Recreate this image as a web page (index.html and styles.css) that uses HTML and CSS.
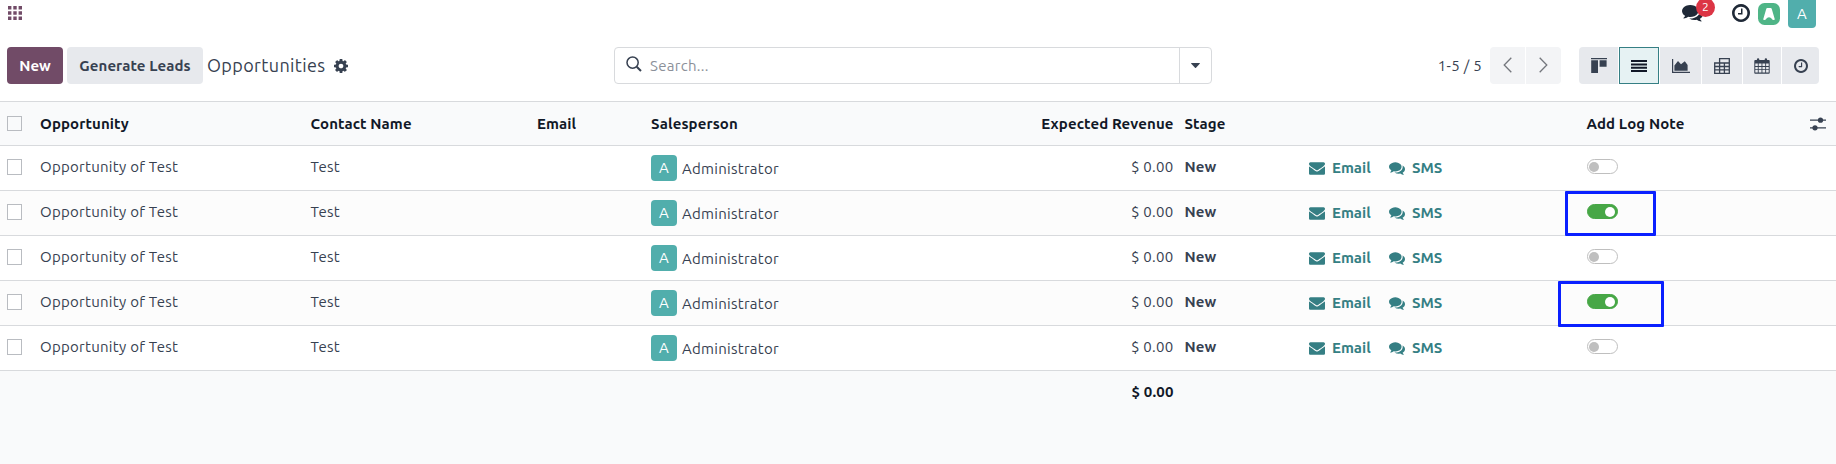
FILE: index.html
```html
<!DOCTYPE html>
<html lang="en">
<head>
<meta charset="utf-8">
<title>Opportunities</title>
<link rel="stylesheet" href="styles.css">
</head>
<body>
<svg class="defs" width="0" height="0" aria-hidden="true">
  <symbol id="comments" viewBox="0 0 1792 1792"><path d="M1408 768q0 139-94 257t-256.5 186.5-353.5 68.5q-86 0-176-16-124 88-278 128-36 9-86 16h-3q-11 0-20.5-8t-11.5-21q-1-3-1-6.5t.5-6.5 2-6l2.5-5 3.5-5.5 4-5 4.5-5 4-4.5q5-6 23-25t26-29.5 22.5-29 25-38.5 20.5-44q-124-72-195-177t-71-224q0-139 94-257t256.5-186.5 353.5-68.5 353.5 68.5 256.5 186.5 94 257zm384 256q0 120-71 224.5t-195 176.5q10 24 20.5 44t25 38.5 22.5 29 26 29.5 23 25q1 1 4 4.5t4.5 5 4 5 3.5 5.5l2.5 5 2 6 .5 6.5-1 6.5q-3 14-13 22t-22 7q-50-7-86-16-154-40-278-128-90 16-176 16-271 0-472-132 58 4 88 4 161 0 309-45t264-129q125-92 192-212t67-254q0-77-23-152 129 71 204 178t75 230z"/></symbol>
  <symbol id="envelope" viewBox="0 0 1792 1792"><path d="M1792 710v794q0 66-47 113t-113 47h-1472q-66 0-113-47t-47-113v-794q44 49 101 87 362 246 497 345 57 42 92.5 65.5t94.5 48 110 24.500h2q51 0 110-24.500t94.500-48 92.500-65.500q170-123 498-345 57-39 100-87zm0-294q0 79-49 151t-122 123q-376 261-468 325-10 7-42.500 31t-54 38.500-52 32.500-57.500 27-50 9h-2q-23 0-50-9t-57.500-27-52-32.500-54-38.500-42.500-31q-91-64-262-182.500t-205-142.500q-62-42-117-115.500t-55-136.500q0-78 41.500-130t118.500-52h1472q65 0 112.500 47t47.500 113z"/></symbol>
  <symbol id="cog" viewBox="128 128 1536 1536"><path d="M1152 896q0-106-75-181t-181-75-181 75-75 181 75 181 181 75 181-75 75-181zm512-109v222q0 12-8 23t-20 13l-185 28q-19 54-39 91 35 50 107 138 10 12 10 25t-9 23q-27 37-99 108t-94 71q-12 0-26-9l-138-108q-44 23-91 38-16 136-29 186-7 28-36 28h-222q-14 0-24.5-8.5t-11.5-21.5l-28-184q-49-16-90-37l-141 107q-10 9-25 9-14 0-25-11-126-114-165-168-7-10-7-23 0-12 8-23 15-21 51-66.5t54-70.5q-27-50-41-99l-183-27q-13-2-21-12.5t-8-23.5v-222q0-12 8-23t19-13l186-28q14-46 39-92-40-57-107-138-10-12-10-24 0-10 9-23 26-36 98.5-107.5t94.5-71.5q13 0 26 10l138 107q44-23 91-38 16-136 29-186 7-28 36-28h222q14 0 24.5 8.5t11.5 21.5l28 184q49 16 90 37l142-107q9-9 24-9 13 0 25 10 129 119 165 170 7 8 7 22 0 12-8 23-15 21-51 66.5t-54 70.5q26 50 41 98l183 28q13 2 21 12.5t8 23.5z"/></symbol>
  <symbol id="clock" viewBox="128 128 1536 1536"><path d="M1024 544v448q0 14-9 23t-23 9h-320q-14 0-23-9t-9-23v-64q0-14 9-23t23-9h224v-352q0-14 9-23t23-9h64q14 0 23 9t9 23zm416 352q0-148-73-273t-198-198-273-73-273 73-198 198-73 273 73 273 198 198 273 73 273-73 198-198 73-273zm224 0q0 209-103 385.5t-279.5 279.5-385.5 103-385.5-103-279.5-279.5-103-385.5 103-385.5 279.5-279.5 385.5-103 385.5 103 279.5 279.5 103 385.5z"/></symbol>
</svg>

<header class="topbar">
  <svg class="apps" viewBox="0 0 14 14"><path d="M0 0h3.4v3.4H0zM5.3 0h3.4v3.4H5.3zM10.6 0H14v3.4h-3.4zM0 5.3h3.4v3.4H0zM5.3 5.3h3.4v3.4H5.3zM10.6 5.3H14v3.4h-3.4zM0 10.6h3.4V14H0zM5.3 10.6h3.4V14H5.3zM10.6 10.6H14V14h-3.4z"/></svg>
  <div class="systray">
    <div class="messages"><svg class="messages-icon"><use href="#comments"/></svg><span class="badge">2</span></div>
    <svg class="activity-icon"><use href="#clock"/></svg>
    <svg class="call-icon" viewBox="0 0 22 22"><rect width="22" height="22" rx="6.5" fill="#4fb587"/><path d="M9.3 5h3.4q.7 0 1 .8l3 10.1q.2 1-.7 1.1-1.500.2-2.300-1.200-.8-1.500-2.700-1.500t-2.700 1.500Q7.500 17.200 6 17q-.9-.1-.7-1.100l3-10.100q.3-.8 1-.8z" fill="#fff"/></svg>
    <span class="user">A</span>
  </div>
</header>

<section class="control">
  <div class="control-left">
    <button class="btn btn-new">New</button>
    <button class="btn btn-gen">Generate Leads</button>
    <h1 class="title">Opportunities</h1>
    <svg class="gear"><use href="#cog"/></svg>
  </div>
  <div class="search">
    <svg class="search-icon" viewBox="0 0 16 16"><circle cx="6.600" cy="6.600" r="5.600"/><path d="M10.700 10.700 15 15" stroke-width="2"/></svg>
    <span class="placeholder">Search...</span>
    <span class="search-drop"><svg class="caret" viewBox="0 0 9 5"><path d="M.3 0h8.400q.3.400 0 .8L5 4.700q-.5.400-1 0L.3.800Q0 .4.300 0z"/></svg></span>
  </div>
  <div class="control-right">
    <span class="range">1-5 / 5</span>
    <div class="pager">
      <span class="page"><svg viewBox="0 0 9 16"><path d="M8.300.700 1.200 8l7.100 7.300"/></svg></span>
      <span class="page"><svg viewBox="0 0 9 16"><path d="m.7.700 7.100 7.300-7.100 7.300"/></svg></span>
    </div>
    <div class="views">
      <span class="view"><svg viewBox="0 0 16 16"><path d="M0 0h16v1.300H0zM.2 2.200H7V15H.2zM8.600 2.200h7v6.600h-7z"/></svg></span>
      <span class="view active"><svg viewBox="0 0 16 16"><path d="M0 2h16v2H0zM0 5.400h16v2H0zM0 8.700h16v2H0zM0 12h16v2H0z"/></svg></span>
      <span class="view"><svg class="wide" viewBox="0 0 18 14"><path d="M0 0h1.200v12.800H18V14H0zM2.400 11.700V6.500L6 2l3 3.200 3.800-3L15.600 6v5.700z"/></svg></span>
      <span class="view"><svg viewBox="0 0 16 16" class="lined"><path d="M5.600 5V.7h9.700v14.600H.7V5h14.600M5.600 5v10.300M10.400 5v10.300M.7 8.500h14.600M.7 11.900h14.600"/></svg></span>
      <span class="view"><svg viewBox="0 0 16 16"><path fill-rule="evenodd" d="M1.200 2h1.700V1.500Q2.900.2 4.100.2t1.200 1.300V2h5.400v-.5q0-1.300 1.200-1.300t1.200 1.300V2h1.700q.9 0 .9.900v12q0 .8-.9.800H1.200q-.9 0-.9-.8v-12q0-.9.900-.9zM1.300 5.600v2.500h2.500V5.600zm3.400 0v2.500h2.800V5.600zm3.700 0v2.500h2.800V5.600zm3.700 0v2.500h2.600V5.600zM1.300 8.900v2.400h2.500V8.900zm3.400 0v2.400h2.800V8.900zm3.700 0v2.400h2.800V8.900zm3.700 0v2.400h2.600V8.900zM1.300 12.100v2.500h2.500v-2.500zm3.400 0v2.500h2.800v-2.500zm3.700 0v2.500h2.800v-2.500zm3.700 0v2.500h2.600v-2.500z"/></svg></span>
      <span class="view"><svg class="small"><use href="#clock"/></svg></span>
    </div>
  </div>
</section>

<main class="list">
  <div class="row head">
    <span class="check"></span><span>Opportunity</span><span>Contact Name</span><span>Email</span><span>Salesperson</span><span class="revenue">Expected Revenue</span><span class="stage">Stage</span><span></span><span>Add Log Note</span>
    <svg class="options" viewBox="0 0 16 14"><path d="M0 3.200h16M0 10.800h16"/><circle cx="10.500" cy="3.200" r="2.600"/><circle cx="5" cy="10.800" r="2.600"/></svg>
  </div>
  <div class="row">
    <span class="check"></span><span>Opportunity of Test</span><span>Test</span><span></span>
    <span class="person"><i class="avatar">A</i><span class="name">Administrator</span></span>
    <span class="revenue">$ 0.00</span><span class="stage">New</span>
    <span class="actions"><svg><use href="#envelope"/></svg><b class="a-email">Email</b><svg><use href="#comments"/></svg><b>SMS</b></span>
    <span class="note"><i class="toggle"></i></span>
  </div>
  <div class="row even">
    <span class="check"></span><span>Opportunity of Test</span><span>Test</span><span></span>
    <span class="person"><i class="avatar">A</i><span class="name">Administrator</span></span>
    <span class="revenue">$ 0.00</span><span class="stage">New</span>
    <span class="actions"><svg><use href="#envelope"/></svg><b class="a-email">Email</b><svg><use href="#comments"/></svg><b>SMS</b></span>
    <span class="note"><i class="toggle on"></i><i class="mark mark-first"></i></span>
  </div>
  <div class="row">
    <span class="check"></span><span>Opportunity of Test</span><span>Test</span><span></span>
    <span class="person"><i class="avatar">A</i><span class="name">Administrator</span></span>
    <span class="revenue">$ 0.00</span><span class="stage">New</span>
    <span class="actions"><svg><use href="#envelope"/></svg><b class="a-email">Email</b><svg><use href="#comments"/></svg><b>SMS</b></span>
    <span class="note"><i class="toggle"></i></span>
  </div>
  <div class="row even">
    <span class="check"></span><span>Opportunity of Test</span><span>Test</span><span></span>
    <span class="person"><i class="avatar">A</i><span class="name">Administrator</span></span>
    <span class="revenue">$ 0.00</span><span class="stage">New</span>
    <span class="actions"><svg><use href="#envelope"/></svg><b class="a-email">Email</b><svg><use href="#comments"/></svg><b>SMS</b></span>
    <span class="note"><i class="toggle on"></i><i class="mark mark-second"></i></span>
  </div>
  <div class="row">
    <span class="check"></span><span>Opportunity of Test</span><span>Test</span><span></span>
    <span class="person"><i class="avatar">A</i><span class="name">Administrator</span></span>
    <span class="revenue">$ 0.00</span><span class="stage">New</span>
    <span class="actions"><svg><use href="#envelope"/></svg><b class="a-email">Email</b><svg><use href="#comments"/></svg><b>SMS</b></span>
    <span class="note"><i class="toggle"></i></span>
  </div>
  <div class="row total"><span></span><span></span><span></span><span></span><span></span><span class="revenue">$ 0.00</span></div>
</main>
</body>
</html>
```
FILE: styles.css
```css
* { box-sizing: border-box; }
body {
  margin: 0;
  height: 464px;
  overflow: hidden;
  display: flex;
  flex-direction: column;
  background: #fff;
  color: #374151;
  font: 15px/22px Ubuntu, "Noto Sans", sans-serif;
  white-space: nowrap;
}
svg { display: block; flex: none; fill: currentColor; }
i { font-style: normal; }
.defs { position: absolute; }

/* top bar */
.topbar { height: 28px; display: flex; justify-content: space-between; padding: 0 20px 0 8px; }
.apps { width: 14px; height: 14px; margin-top: 6px; color: #714b67; }
.systray { display: flex; align-items: flex-start; color: #1f2937; }
.messages { position: relative; margin-right: 29px; }
.messages-icon { width: 21px; height: 21px; margin-top: 2px; }
.badge {
  position: absolute; left: 14px; top: -2px;
  width: 19px; height: 19px; border-radius: 10px;
  background: #dc3545; color: #fff;
  font-size: 12px; line-height: 17px; text-align: center;
}
.activity-icon { width: 18px; height: 18px; margin: 4px 8px 0 0; }
.call-icon { width: 22px; height: 22px; margin: 3px 8px 0 0; }
.user {
  width: 28px; height: 28px; border-radius: 0 0 4px 4px;
  background: #51aeac; color: #fff; font-size: 15px; line-height: 28px; text-align: center;
}

/* control panel */
.control {
  height: 74px; padding: 19px 17px 17px 7px;
  display: grid; grid-template-columns: 607px 598px 1fr;
  border-bottom: 1px solid #d8dadd;
}
.control-left { display: flex; align-items: center; }
.btn {
  height: 37px; padding: 0; border: 0; border-radius: 4px;
  font: 600 15px/37px Ubuntu, "Noto Sans", sans-serif;
}
.btn-new { width: 56px; margin-right: 4px; background: #714b67; color: #fff; }
.btn-gen { width: 136px; margin-right: 4px; background: #e7e9ed; color: #374151; letter-spacing: .08px; }
.title { margin: 0; width: 127px; padding-bottom: 1px; font-size: 18px; font-weight: 400; letter-spacing: .38px; }
.gear { width: 14px; height: 14px; }
.search { display: flex; align-items: center; height: 37px; border: 1px solid #d8dadd; border-radius: 4px; padding-left: 11px; }
.search-icon { width: 16px; height: 16px; margin: -3px 8px 0 0; fill: none; stroke: #374151; stroke-width: 1.5; }
.placeholder { color: #8b9099; letter-spacing: .3px; }
.search-drop { margin-left: auto; width: 32px; height: 35px; border-left: 1px solid #d8dadd; display: flex; align-items: center; justify-content: center; }
.caret { width: 9px; height: 5px; }
.control-right { display: flex; align-items: center; justify-content: flex-end; }
.range { margin-right: 8px; letter-spacing: .3px; }
.pager, .views { display: flex; gap: 1px; }
.pager { margin-right: 18px; }
.page {
  width: 35px; height: 37px; background: #f3f4f6; color: #74777d;
  display: flex; align-items: center; justify-content: center;
}
.page svg { width: 9px; height: 16px; margin-top: -2px; fill: none; stroke: currentColor; stroke-width: 1.3; }
.page:first-child, .view:first-child { border-radius: 4px 0 0 4px; }
.page:last-child, .view:last-child { border-radius: 0 4px 4px 0; }
.view { width: 40px; height: 37px; background: #e7e9ed; display: flex; align-items: center; justify-content: center; }
.view:first-child { width: 39px; }
.view:nth-child(3) { width: 41px; }
.view:nth-child(5) { width: 38px; }
.view:nth-child(6) { width: 37px; }
.view svg { width: 16px; height: 16px; }
.view .wide { width: 18px; height: 14px; }
.view .small { width: 14px; height: 14px; }
.view .lined { fill: none; stroke: currentColor; stroke-width: 1.3; }
.view.active { background: #e6f2f3; border: 1px solid #357f84; color: #111827; }

/* list */
.list { flex: 1; background: #f9fafb; }
.row {
  height: 45px; padding: 0 10px 1px 7px;
  display: grid;
  grid-template-columns: 33px 270.5px 226.5px 114px 254px 268.5px 135.5px 277.5px 1fr 16px;
  align-items: center; background: #fff; border-bottom: 1px solid #d8dadd;
  letter-spacing: .27px;
}
.row > span { padding-bottom: 1px; }
.row.head { height: 44px; padding-bottom: 0; background: #f9fafb; color: #111827; font-weight: 600; letter-spacing: .1px; }
.row.head > span:not(.check) { padding: 1px 0 0; }
.row.head > .stage:not(.check) { padding-left: 11px; }
.row.even { background: #fcfcfc; }
.row.total { border: 0; padding-bottom: 3px; background: none; color: #111827; font-weight: 700; letter-spacing: .15px; }
.check { width: 15px; height: 15px; border: 1px solid #b9bcc1; background: #fff; }
.row:not(.head) .check { height: 16px; margin-top: -1px; }
.head .check { background: transparent; }
.revenue { text-align: right; }
.stage { padding-left: 11px; font-weight: 600; letter-spacing: .1px; }
.person { display: flex; align-items: center; gap: 5px; padding-top: 2px; }
.name { padding-top: 2px; }
.avatar { width: 26px; height: 26px; border-radius: 4px; background: #51aeac; color: #fff; text-align: center; line-height: 26px; }
.actions { display: flex; align-items: center; color: #357f84; padding-top: 1px; letter-spacing: 0; }
.actions svg { width: 16px; height: 16px; margin-right: 7px; }
.actions b { font-weight: 600; }
.a-email { width: 57px; }
.row > .note { position: relative; padding-bottom: 2px; }
.toggle { display: flex; align-items: center; width: 31px; height: 15px; border: 1px solid #bfbfbf; border-radius: 8px; background: #fff; padding: 0 1.5px; }
.toggle::before { content: ""; width: 10px; height: 10px; border-radius: 50%; background: #bfbfbf; }
.toggle.on { background: #47a746; border-color: #47a746; justify-content: flex-end; }
.toggle.on::before { background: #fff; }
.mark { position: absolute; border: 3px solid #0a20ff; border-radius: 1px; }
.mark-first { left: -22px; top: -13px; width: 91px; height: 45px; }
.mark-second { left: -29px; top: -13px; width: 106px; height: 46px; }
.options { width: 16px; height: 14px; color: #374151; stroke: currentColor; stroke-width: 1.2; }
.options circle { stroke: none; }
```
